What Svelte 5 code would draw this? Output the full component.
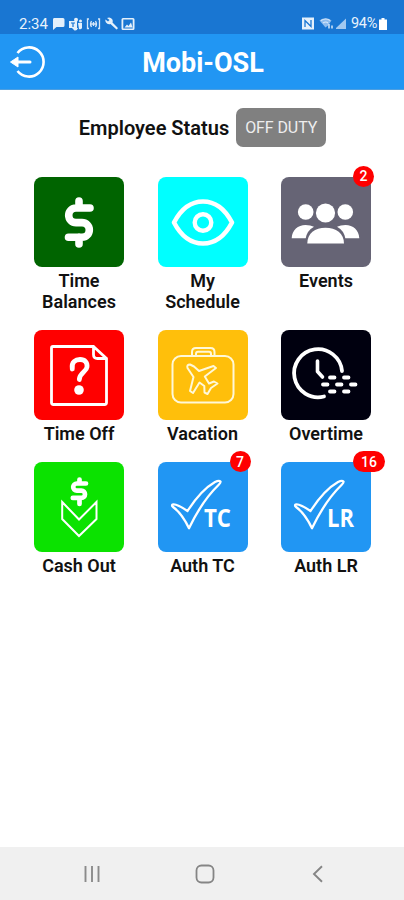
<script>
    let status = "OFF DUTY";

    const tiles = [
        { id: "balances", label: "Time Balances", color: "#006400" },
        { id: "schedule", label: "My Schedule", color: "#00ffff" },
        { id: "events", label: "Events", color: "#666475", badge: 2 },
        { id: "timeoff", label: "Time Off", color: "#ff0000" },
        { id: "vacation", label: "Vacation", color: "#ffbf0b" },
        { id: "overtime", label: "Overtime", color: "#00000f" },
        { id: "cashout", label: "Cash Out", color: "#0be200" },
        { id: "auth", code: "TC", label: "Auth TC", color: "#2196f3", badge: 7 },
        { id: "auth", code: "LR", label: "Auth LR", color: "#2196f3", badge: 16 },
    ];
</script>

<div class="phone">
    <div class="status-bar">
        <span class="clock">2:34</span>
        <svg class="notifications" width="84" height="14" viewBox="0 0 84 14" fill="#e4f0fb">
            <path d="M2 1h9q1.500 0 1.500 1.500v6q0 1.500-1.500 1.500H4.500L1 13V2.500Q1 1 2 1z" />
            <circle cx="24" cy="2.800" r="2" />
            <circle cx="28.500" cy="4" r="1.500" />
            <path d="M17 4h8v7h-8zM26 6h4v5q-1 2-3 1zM20 11h6q-1 3-3.500 2.500z" />
            <path d="M19 6h4M21 6v4" stroke="#1976d2" stroke-width="1.200" />
            <path
                d="M37 2h-1.500v9.500H37M46 2h1.500v9.500H46M39.500 4q-2 3 0 6M43.500 4q2 3 0 6M41.500 5v4M38 7h7"
                fill="none" stroke="#d5e6f8" stroke-width="1.300"
            />
            <path d="M55 1q3-1.500 5 1 1.200 1.500.500 3.500l5 5q.800 1.500-1 2l-6-5.500q-3 .800-4.500-1.500-1-1.500-.500-3l2.500 2 1.500-1.500z" />
            <path fill-rule="evenodd" d="M71 1h10q1.500 0 1.500 1.500v9q0 1.500-1.500 1.500H71q-1.500 0-1.500-1.500v-9Q69.500 1 71 1zm.300 1.600v8.800h9.400V2.600zM72.500 10.500l2.500-3 1.500 1.500L79 5.500l1.500 5z" />
        </svg>
        <span class="spacer"></span>
        <svg class="signals" width="46" height="13" viewBox="0 0 46 13">
            <path d="M0 .500h12v12H0z" fill="#e4f0fb" />
            <path d="M3 10V3.500l5 5M9 3v6.500L5.500 6" fill="none" stroke="#1976d2" stroke-width="1.300" />
            <path d="M17.500 3.500q6-4.500 12 0L26 8.500l-2.500 2z" fill="#8dbcee" />
            <path d="M19 3.500q5-3 9 0M21 6q3-2 5 0" fill="none" stroke="#d5e6f8" stroke-width="1.200" />
            <path d="M27 7v4.500M30 8.500v3" stroke="#e4f0fb" stroke-width="1.400" />
            <path d="M34 12V11L44 1.500V12z" fill="#a3c9f0" />
        </svg>
        <span class="percent">94%</span>
        <svg width="8" height="12" viewBox="0 0 8 12">
            <path d="M2.500 0h3v1.500H8V12H0V1.500h2.500z" fill="#fff" />
        </svg>
    </div>

    <header class="app-bar">
        <button class="back-btn" aria-label="Log out">
            <svg width="36" height="34" viewBox="0 0 36 34" fill="none" stroke="#fff" stroke-width="2.600">
                <path d="M7.500 8A14.600 14.600 0 1 1 7.500 26" />
                <path d="M6 17h14" stroke-width="3" stroke-linecap="round" />
                <path d="M.500 17l7.500-5v10z" fill="#fff" stroke-width="1" stroke-linejoin="round" />
            </svg>
        </button>
        <h1>Mobi-OSL</h1>
    </header>

    <main>
        <div class="status-row">
            <span class="status-label">Employee Status</span>
            <button class="status-btn">{status}</button>
        </div>

        <div class="tiles">
            {#each tiles as tile}
                <div class="tile">
                    <button class="tile-icon" style="background-color: {tile.color}" aria-label={tile.label}>
                        <svg viewBox="0 0 90 90" fill="none" stroke="#fff" stroke-linecap="round" stroke-linejoin="round">
                            {#if tile.id === "balances"}
                                <path
                                    d="M56 31H42a7.300 7.300 0 0 0 0 14.600h6A7.300 7.300 0 0 1 48 60.200H34.500M45 24v7M45 60v7"
                                    stroke-width="7.600"
                                />
                            {:else if tile.id === "schedule"}
                                <path d="M16 45.500Q27 24.500 45 24.500T74 45.500Q63 66.500 45 66.500T16 45.500z" stroke-width="4.600" />
                                <circle cx="45" cy="45.500" r="8.300" stroke-width="4.400" />
                            {:else if tile.id === "events"}
                                <g fill="#fff" stroke="none">
                                    <circle cx="24.700" cy="35" r="7.800" />
                                    <circle cx="64.300" cy="35" r="7.800" />
                                    <circle cx="44.500" cy="36" r="9.600" />
                                    <path d="M10.700 61.300C11 53 17 48 24.500 48q5 0 8.500 1.700-7 3.800-8.300 11.600z" />
                                    <path d="M78.300 61.300C78 53 72 48 64.500 48q-5 0-8.500 1.700 7 3.800 8.300 11.600z" />
                                    <path d="M26.300 66.500C26.300 56.500 34 50.800 44.500 50.800S63 56.500 63 66.500z" />
                                </g>
                            {:else if tile.id === "timeoff"}
                                <path d="M59.500 16.500H19q-1.500 0-1.500 1.500v54.500q0 2 2 2H70.500q2 0 2-2V28.500zV24.500q0 4 4 4h9" stroke-width="2.800" />
                                <path d="M38.300 39C37 31.500 42 29.500 46 29.500c5 0 7.500 3 7 7.500-.500 5-7.300 5.500-7.700 12.500" stroke-width="4.800" />
                                <circle cx="45" cy="60" r="4.800" fill="#fff" stroke="none" />
                            {:else if tile.id === "vacation"}
                                <g stroke="#fff8d8" stroke-width="2">
                                    <rect x="14.500" y="26" width="61" height="46.500" rx="8.500" />
                                    <path d="M34 26v-4q0-4 4-4h14.500q4 0 4 4v4M38 26v-2q0-2.200 2-2.200h11q2 0 2 2.200v2" />
                                    <path
                                        d="M29.500 38Q28.500 34.500 32 34.500L36 36.500 41 41 55.500 36 58 38 46.800 46.500 51 53.500 56 51.500 59.500 53.500 53 58 49.500 64 46.500 62.500 46.300 56 41.500 52.500 35 63 32 61 35.500 47z"
                                        stroke-width="2"
                                    />
                                </g>
                            {:else if tile.id === "overtime"}
                                <path d="M61 41A24 24 0 1 0 43 66.500" stroke-width="3.800" />
                                <path d="M36.500 31v10.500L41.500 47" stroke-width="3.600" />
                                <path
                                    d="M49 47.500h4.500M63 47.500h4.500M42 54.500h4.500M56 54.500h4.500M70 54.500h4.500M49 61.500h4.500M63 61.500h4.500"
                                    stroke-width="3.800"
                                />
                            {:else if tile.id === "cashout"}
                                <path
                                    d="M52 21.500H42.800a3.600 3.600 0 0 0 0 7.200h4.600a3.600 3.600 0 0 1 0 7.200H38.800M45.500 17.500v3.500M45.500 36.500v5.500"
                                    stroke-width="4.700"
                                />
                                <path d="M28.200 40L45 57.500 62.500 40V57L45 74 28.200 57z" stroke-width="2" stroke-linejoin="miter" />
                            {:else}
                                <path
                                    d="M14.500 42.500Q18 41 29.500 49 43 28 57 20q4-2 5.500-.500.500 1-2 3.500Q44 39 31 66.300 24 51.500 15 45q-1.500-1.500-.500-2.500z"
                                    stroke-width="2.300"
                                />
                                <text x="46" y="65.300" textLength="27" lengthAdjust="spacingAndGlyphs">{tile.code}</text>
                            {/if}
                        </svg>
                        {#if tile.badge}
                            <span class="badge" class:wide={tile.badge > 9}>{tile.badge}</span>
                        {/if}
                    </button>
                    <span class="tile-label">{tile.label}</span>
                </div>
            {/each}
        </div>
    </main>

    <nav class="nav-bar">
        <svg width="20" height="20" viewBox="0 0 20 20">
            <path d="M3.500 2v16M10 2v16M16.500 2v16" stroke="#8b8b8b" stroke-width="1.900" />
        </svg>
        <svg width="20" height="20" viewBox="0 0 20 20">
            <rect x="1.500" y="1.500" width="17" height="17" rx="5" fill="none" stroke="#858585" stroke-width="1.800" />
        </svg>
        <svg width="20" height="20" viewBox="0 0 20 20">
            <path d="M14 2.300L6 10l8 7.700" fill="none" stroke="#858585" stroke-width="1.900" />
        </svg>
    </nav>
</div>

<style>
    :global(body) {
        background: #fff;
    }

    .phone {
        width: 404px;
        height: 900px;
        display: flex;
        flex-direction: column;
        font-family: Roboto, sans-serif;
        color: #111;
        background: #fff;
    }

    button {
        border: none;
        padding: 0;
        font-family: inherit;
        cursor: pointer;
    }

    svg {
        display: block;
    }

    .status-bar {
        height: 34px;
        box-sizing: border-box;
        padding: 13px 17px 0 19px;
        display: flex;
        align-items: center;
        background: #1976d2;
        color: #e8f2fc;
    }

    .clock {
        font-size: 15px;
        line-height: 20px;
    }

    .notifications {
        margin-left: 4px;
    }

    .spacer {
        flex: 1;
    }

    .signals {
        margin-right: 3px;
    }

    .percent {
        font-size: 14.5px;
        line-height: 20px;
        letter-spacing: -0.3px;
        margin-right: 2px;
    }

    .app-bar {
        height: 56px;
        box-sizing: border-box;
        padding: 0 10px;
        display: grid;
        grid-template-columns: 36px 1fr 36px;
        align-items: center;
        background: #2196f3;
        border-bottom: 1px solid #4e9fe0;
    }

    .back-btn {
        background: none;
    }

    h1 {
        margin: 0;
        padding: 2px 0 0 2px;
        text-align: center;
        font-size: 27px;
        font-weight: 700;
        line-height: 34px;
        color: #fff;
    }

    main {
        flex: 1;
        padding: 18px 33px 0 34px;
    }

    .status-row {
        display: flex;
        justify-content: center;
        align-items: center;
        gap: 7px;
        margin-bottom: 29.5px;
    }

    .status-label {
        font-size: 20px;
        font-weight: 600;
    }

    .status-btn {
        width: 90px;
        height: 39px;
        border-radius: 7px;
        background: #808080;
        color: #eee;
        font-size: 16px;
        letter-spacing: -0.1px;
    }

    .tiles {
        display: grid;
        grid-template-columns: repeat(3, 90px);
        justify-content: space-between;
        row-gap: 18px;
    }

    .tile {
        display: flex;
        flex-direction: column;
        align-items: center;
        gap: 3px;
    }

    .tile-icon {
        position: relative;
        width: 90px;
        height: 90px;
        border-radius: 8px;
    }

    .tile-icon text {
        font-family: "Open Sans", sans-serif;
        font-size: 25px;
        font-weight: 700;
        fill: #fff;
        stroke: none;
    }

    .badge {
        position: absolute;
        top: -11px;
        left: 72px;
        width: 21px;
        height: 21px;
        display: flex;
        justify-content: center;
        align-items: center;
        border-radius: 11px;
        background: #ff0000;
        color: #fff;
        font-size: 14px;
        font-weight: 500;
    }

    .badge.wide {
        width: 32px;
    }

    .tile-label {
        font-size: 18px;
        font-weight: 600;
        line-height: 21.3px;
        text-align: center;
    }

    .nav-bar {
        height: 53px;
        display: flex;
        justify-content: center;
        align-items: center;
        gap: 93px;
        padding-left: 6px;
        background: #f0f0f0;
    }
</style>
